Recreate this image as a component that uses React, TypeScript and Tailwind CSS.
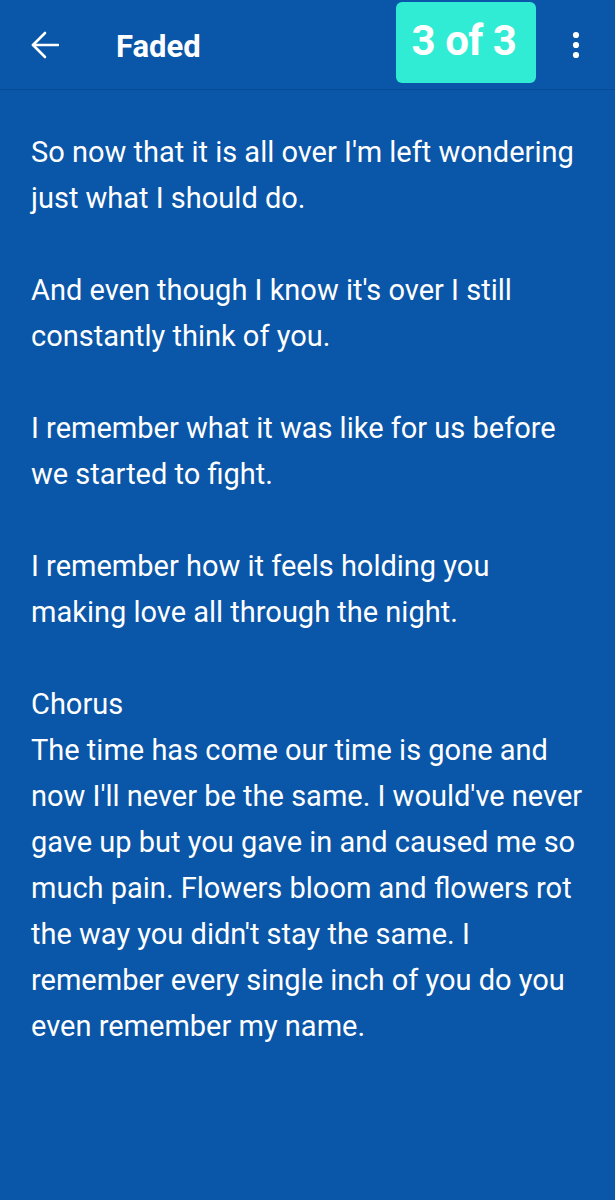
const LYRICS = `So now that it is all over I'm left wondering just what I should do.

And even though I know it's over I still constantly think of you.

I remember what it was like for us before we started to fight.

I remember how it feels holding you making love all through the night.

Chorus
The time has come our time is gone and now I'll never be the same. I would've never gave up but you gave in and caused me so much pain. Flowers bloom and flowers rot the way you didn't stay the same. I remember every single inch of you do you even remember my name.`

function BackArrow() {
  return (
    <svg width="28" height="28" viewBox="0 0 28 28" fill="none" stroke="currentColor" strokeWidth="2.6" strokeLinecap="round" strokeLinejoin="round" className="shrink-0">
      <path d="M27 14H2" />
      <path d="M14 2 2 14l12 12" />
    </svg>
  )
}

function MoreDots() {
  return (
    <svg width="8" height="28" viewBox="0 0 8 28" fill="currentColor" className="shrink-0">
      <circle cx="4" cy="4" r="3.1" />
      <circle cx="4" cy="14" r="3.1" />
      <circle cx="4" cy="24" r="3.1" />
    </svg>
  )
}

export default function App() {
  return (
    <div className="min-h-[1200px] bg-[#0a56a8] text-white font-['Roboto',sans-serif]">
      {/* Toolbar */}
      <header className="h-[90px] flex items-center pl-[31px] pr-[35px] border-b border-[#084c96]">
        <BackArrow />
        <h1 className="ml-[57px] mt-[4px] text-[31px] font-bold leading-none">Faded</h1>
        <div className="ml-auto self-start mt-[2px] h-[81px] w-[140px] rounded-[6px] bg-[#30ecd4] flex items-center justify-center pr-[4px] text-[42px] font-bold leading-none tracking-[-0.5px] pb-[3px]">
          3 of 3
        </div>
        <div className="ml-[36px]">
          <MoreDots />
        </div>
      </header>

      <main className="pt-[39px] px-[31px]">
        <p className="whitespace-pre-wrap text-[29px] leading-[46px]">{LYRICS}</p>
      </main>
    </div>
  )
}
